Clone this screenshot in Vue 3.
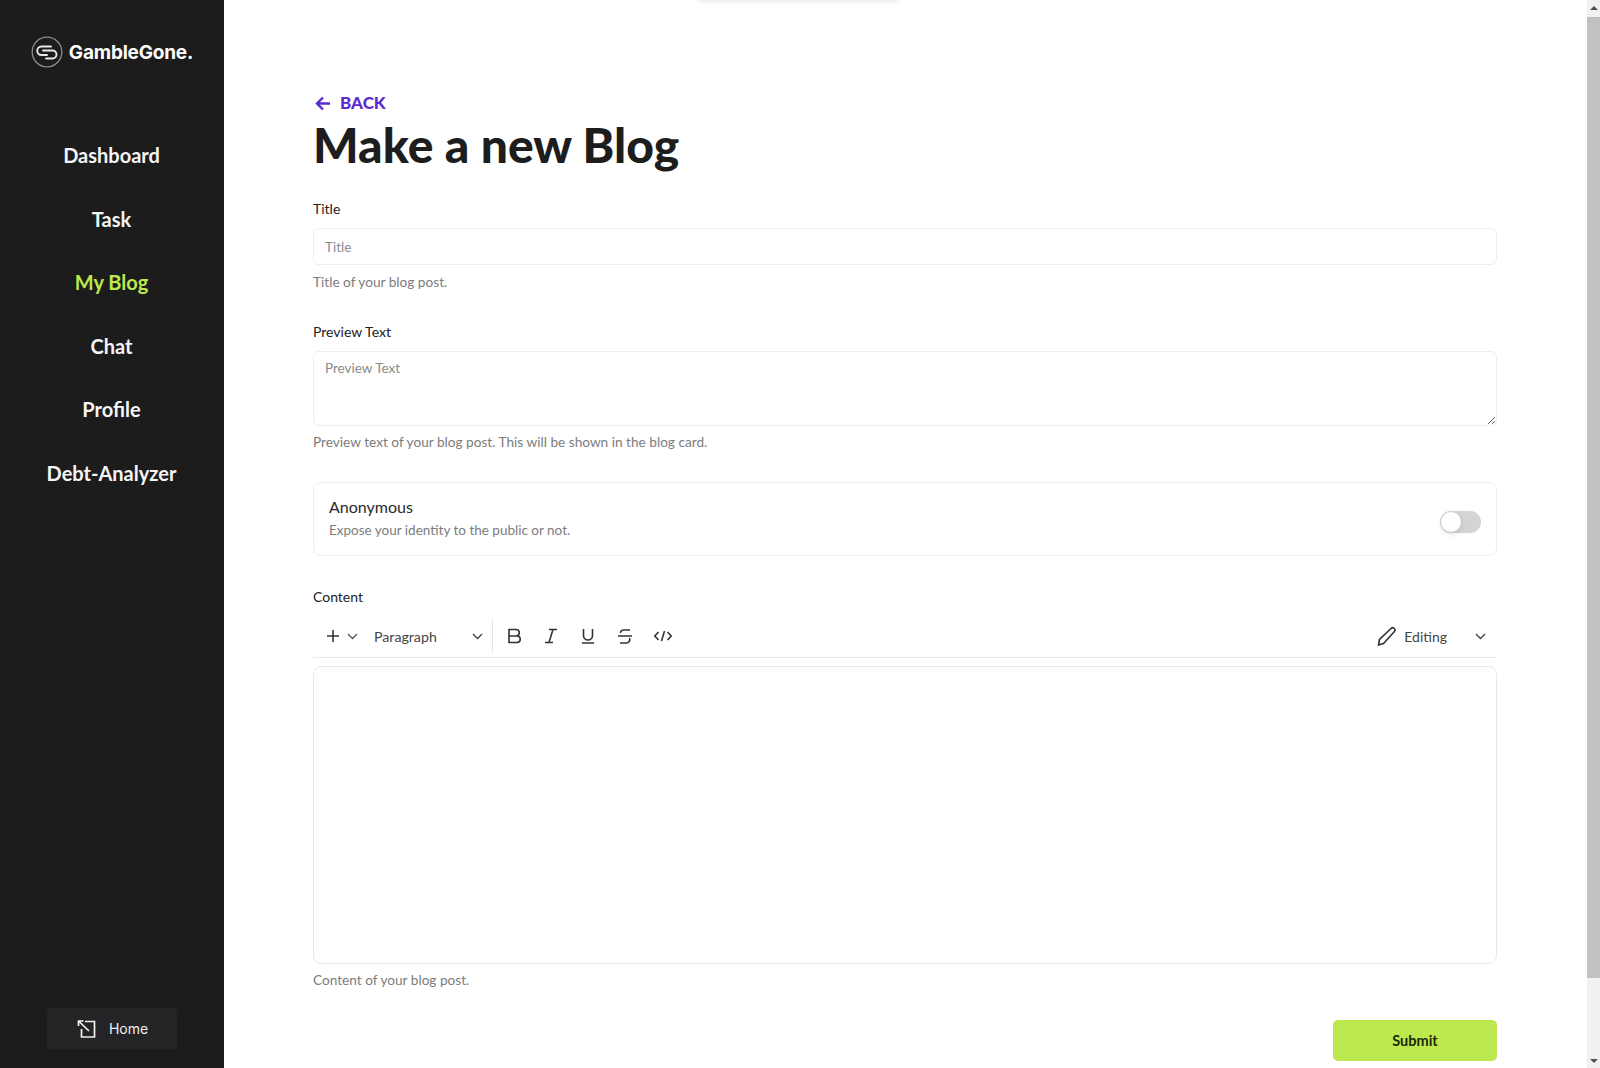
<template>
  <div class="page">
    <aside class="sidebar">
      <div class="brand">
        <svg class="brand-mark" viewBox="0 0 32 32" fill="none" stroke="#e8e8e8">
          <circle cx="16" cy="16" r="14.8" stroke-width="1.3" stroke="#8d8d8d" />
          <path d="M20 10.500H10.500a4.200 4.200 0 0 0 0 8.500H16" stroke-width="1.9" stroke-linecap="round" />
          <path d="M12 14.500h9.500a4 4 0 0 1 0 8H15" stroke-width="1.9" stroke-linecap="round" />
        </svg>
        <span>GambleGone.</span>
      </div>
      <nav class="nav">
        <a v-for="item in navItems" :key="item" class="nav-item" :class="{ active: item === 'My Blog' }">{{ item }}</a>
      </nav>
      <button class="home-btn">
        <svg width="22" height="22" viewBox="0 0 22 22" fill="none" stroke="#f2f2f2" stroke-width="1.7">
          <path d="M9 3.500h9.500v15.500h-13V11" />
          <path d="M13 13 2.500 3M2.500 8V3h5" />
        </svg>
        Home
      </button>
    </aside>

    <main class="main">
      <div class="toast-edge"></div>
      <a class="back">
        <svg width="16" height="15" viewBox="0 0 16 15" fill="none" stroke="#5b2bd0" stroke-width="2.4">
          <path d="M15 7.500H2M8 1.500 2 7.500l6 6" />
        </svg>
        BACK
      </a>
      <h1 class="heading">Make a new Blog</h1>

      <section class="field first">
        <label class="label">Title</label>
        <input class="input" placeholder="Title" />
        <p class="help">Title of your blog post.</p>
      </section>

      <section class="field preview">
        <label class="label">Preview Text</label>
        <textarea class="input area" placeholder="Preview Text"></textarea>
        <p class="help">Preview text of your blog post. This will be shown in the blog card.</p>
      </section>

      <section class="switch-card">
        <div class="switch-text">
          <div class="switch-title">Anonymous</div>
          <div class="switch-sub">Expose your identity to the public or not.</div>
        </div>
        <div class="switch"><span class="knob"></span></div>
      </section>

      <section class="field content">
        <label class="label">Content</label>
        <div class="toolbar">
          <svg class="tool-plus" width="16" height="16" viewBox="0 0 16 16" stroke="#333" stroke-width="1.6"><path d="M8 2v12M2 8h12" /></svg>
          <svg class="chev" width="11" height="7" viewBox="0 0 11 7" fill="none" stroke="#555" stroke-width="1.4"><path d="m1 1 4.500 4.500L10 1" /></svg>
          <div class="para">
            <span>Paragraph</span>
            <svg class="chev" width="11" height="7" viewBox="0 0 11 7" fill="none" stroke="#444" stroke-width="1.4"><path d="m1 1 4.500 4.500L10 1" /></svg>
          </div>
          <div class="divider"></div>
          <div class="marks">
            <svg width="18" height="18" viewBox="0 0 18 18" fill="none" stroke="#333" stroke-width="1.600"><path d="M4 2.500h7a3 3 0 0 1 0 6.500H4zM4 9h8a3.200 3.200 0 0 1 0 6.500H4z" /></svg>
            <svg width="18" height="18" viewBox="0 0 18 18" fill="none" stroke="#333" stroke-width="1.600"><path d="M7 2.500h8M3 15.500h8M11 2.500l-4 13" /></svg>
            <svg width="18" height="18" viewBox="0 0 18 18" fill="none" stroke="#333" stroke-width="1.600"><path d="M4.500 2v6.500a4.500 4.500 0 0 0 9 0V2M3 16h12" /></svg>
            <svg width="18" height="18" viewBox="0 0 18 18" fill="none" stroke="#333" stroke-width="1.600"><path d="M14 3H7.500a3 3 0 0 0-3 3M2 9h14M13.500 11a3.500 3.500 0 0 1-3 5H4" /></svg>
            <svg width="20" height="18" viewBox="0 0 20 18" fill="none" stroke="#333" stroke-width="1.600"><path d="M5.500 5 1.800 9l3.700 4M14.500 5l3.700 4-3.700 4M11.500 4l-3 10" /></svg>
          </div>
          <div class="mode">
            <svg width="20" height="20" viewBox="0 0 20 20" fill="none" stroke="#333" stroke-width="1.600"><path d="M1.500 19 2.500 13.500 14 2.500a2.200 2.200 0 0 1 3.200 3.200L6.500 17.500z" /></svg>
            <span>Editing</span>
            <svg class="chev" width="11" height="7" viewBox="0 0 11 7" fill="none" stroke="#444" stroke-width="1.4"><path d="m1 1 4.500 4.500L10 1" /></svg>
          </div>
        </div>
        <div class="editor"></div>
        <p class="help">Content of your blog post.</p>
      </section>

      <div class="actions">
        <button class="submit">Submit</button>
      </div>
    </main>

    <div class="scrollbar">
      <span class="arrow up"></span>
      <div class="thumb"></div>
      <div class="track"></div>
      <span class="arrow down"></span>
    </div>
  </div>
</template>

<script setup>
const navItems = ['Dashboard', 'Task', 'My Blog', 'Chat', 'Profile', 'Debt-Analyzer']
</script>

<style>
html, body { margin: 0; overflow: hidden; }
</style>

<style scoped>
.page { display: flex; height: 1068px; overflow: hidden; font-family: Lato, "Open Sans", sans-serif; color: #1d1d1d; background: #fff; }

.sidebar { width: 224px; flex: none; background: #1c1c1c; display: flex; flex-direction: column; align-items: center; box-sizing: border-box; padding: 36px 0 19px; }
.brand { display: flex; align-items: center; gap: 6px; color: #fff; font-family: Inter, sans-serif; font-weight: 700; font-size: 19px; letter-spacing: -0.2px; height: 32px; }
.brand-mark { width: 32px; height: 32px; flex: none; }
.nav { display: flex; flex-direction: column; align-items: center; margin-top: 73px; gap: 35.500px; flex: 1; margin-right: 1px; }
.nav-item { color: #f5f5f5; font-weight: 700; font-size: 20px; line-height: 28px; }
.nav-item.active { color: #bde84e; }
.home-btn { width: 130px; height: 41px; background: #242427; border: none; border-radius: 3px; color: #f0f0f0; font-family: Inter, sans-serif; font-size: 14px; display: flex; align-items: center; justify-content: center; gap: 11px; }

.main { flex: 1; position: relative; box-sizing: border-box; padding: 93px 90px 0 89px; min-width: 0; }
.toast-edge { position: absolute; left: 476px; top: -10px; width: 197px; height: 10px; box-shadow: 0 1px 5px rgba(0, 0, 0, 0.12); }
.back { display: flex; align-items: center; gap: 9px; color: #5b2bd0; font-weight: 900; font-size: 17px; line-height: 20px; padding-left: 2px; }
.heading { margin: 0; font-family: Lato, sans-serif; font-weight: 900; font-size: 48px; line-height: 64px; color: #1d1d1d; }

.field { display: flex; flex-direction: column; }
.first { margin-top: 23px; }
.preview { margin-top: 32px; }
.content { margin-top: 32px; }
.label { font-size: 14px; line-height: 18px; font-weight: 400; color: #222; margin-bottom: 10px; }
.input { box-sizing: border-box; height: 37px; border: 1px solid #eeeeee; border-radius: 6px; padding: 0 11px; font-family: Lato, sans-serif; font-size: 13.500px; background: #fff; outline: none; display: block; width: 100%; }
.input::placeholder { color: #8a8a8a; opacity: 1; }
.area { height: 75px; padding-top: 7px; line-height: 18px; resize: vertical; }
.help { margin: 8px 0 0; font-size: 13.650px; line-height: 18px; color: #7c7c7c; }
.preview .help { margin-top: 7px; }

.switch-card { margin-top: 31px; box-sizing: border-box; height: 74px; border: 1px solid #eeeeee; border-radius: 8px; display: flex; align-items: center; justify-content: space-between; padding: 0 15px 0 15px; }
.switch-text { margin-top: -3px; }
.switch-title { font-size: 16px; line-height: 22px; color: #2a2a2a; }
.switch-sub { font-size: 13.500px; line-height: 18px; color: #7c7c7c; margin-top: 3px; }
.switch { width: 41px; height: 22px; border-radius: 11px; background: #d4d4d4; position: relative; margin-top: 6px; }
.knob { position: absolute; left: 1px; top: 1px; width: 20px; height: 20px; border-radius: 50%; background: #fff; box-shadow: 0 2px 6px rgba(0, 0, 0, 0.12); }

.toolbar { display: flex; align-items: center; height: 43px; margin-top: -1px; border-bottom: 1px solid #e9e9e9; box-sizing: border-box; padding-left: 12px; }
.tool-plus { margin-right: 6px; }
.chev { flex: none; }
.para { display: flex; align-items: center; justify-content: space-between; width: 113px; margin-left: 16px; font-size: 14.200px; color: #444; padding-right: 4px; box-sizing: border-box; }
.divider { width: 1px; height: 32px; background: #e4e4e4; margin: 0 5px 0 5px; }
.marks { display: flex; align-items: center; gap: 19px; padding-left: 7px; }
.mode { margin-left: auto; display: flex; align-items: center; font-size: 14px; color: #444; padding-right: 11px; }
.mode span { margin: 0 28px 0 7px; }

.editor { height: 298px; margin-top: 8px; box-sizing: border-box; border: 1px solid #e9e9e9; border-radius: 8px; }
.content .help { margin-top: 7px; }
.actions { display: flex; justify-content: flex-end; margin-top: 31px; }
.submit { width: 164px; height: 41px; border: none; border-radius: 5px; background: #bde84e; color: #1c2b0a; font-family: Lato, sans-serif; font-weight: 700; font-size: 14.500px; }

.scrollbar { width: 13px; flex: none; background: #f1f1f1; display: flex; flex-direction: column; align-items: center; }
.thumb { width: 100%; height: 961px; background: #c1c1c1; }
.track { flex: 1; }
.arrow { width: 0; height: 0; border-left: 4px solid transparent; border-right: 4px solid transparent; flex: none; }
.arrow.up { border-bottom: 4px solid #505050; margin: 6px 0 7px; }
.arrow.down { border-top: 4px solid #505050; margin: 7px 0 5px; }
</style>
